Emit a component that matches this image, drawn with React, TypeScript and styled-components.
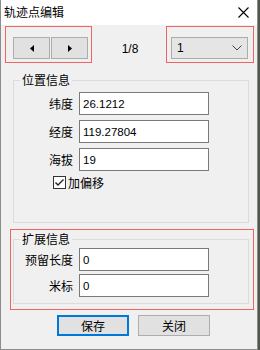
import React from "react";
import styled, { createGlobalStyle } from "styled-components";

const Global = createGlobalStyle`
  html, body { margin: 0; padding: 0; background: #4d5a4a; }
  body { font-family: "Noto Sans CJK SC", "Liberation Sans", sans-serif; font-size: 12px; color: #000; }
  * { box-sizing: border-box; }
`;

const Win = styled.div`
  width: 258px;
  height: 350px;
  background: #f0f0f0;
  border: 1px solid #8c8c8c;
  border-top: none;
  display: flex;
  flex-direction: column;
`;

const TitleBar = styled.div`
  height: 25px;
  background: #fff;
  display: flex;
  align-items: center;
  justify-content: space-between;
  padding: 0 8px 0 3px;
  flex: none;
`;

const Title = styled.span`
  font-size: 12px;
  line-height: 14px;
  margin-top: -2px;
`;

const TopRow = styled.div`
  display: grid;
  grid-template-columns: 87px 1fr 88px;
  width: 249px;
  margin: 1px 0 0 4px;
  height: 37px;
`;

const RedBox = styled.div`
  border: 1px solid #f06464;
`;

const NavBox = styled(RedBox)`
  display: flex;
  gap: 1px;
  padding: 10px 0 0 7px;
`;

const NavBtn = styled.div`
  width: 37px;
  height: 22px;
  background: #e1e1e1;
  border: 1px solid #adadad;
  display: flex;
  align-items: center;
  justify-content: center;
`;

const Counter = styled.div`
  display: flex;
  align-items: center;
  justify-content: center;
  padding-top: 8px;
  padding-left: 2px;
  font-family: "Liberation Sans", sans-serif;
  font-size: 12px;
`;

const ComboBox = styled(RedBox)`
  padding: 10px 4px 0 4px;
`;

const Combo = styled.div`
  height: 22px;
  width: 77px;
  background: #e5e5e5;
  border: 1px solid #acacac;
  display: flex;
  align-items: center;
  justify-content: space-between;
  padding: 0 5px 0 5px;
  font-family: "Liberation Sans", sans-serif;
  font-size: 12px;
`;

const Group = styled.fieldset<{ $h: number }>`
  margin: 0;
  width: 236px;
  height: ${(p) => p.$h}px;
  border: 1px solid #dcdcdc;
  padding: 0;
`;

const Legend = styled.legend`
  margin-left: 6px;
  padding: 0 2px;
  font-size: 12px;
  line-height: 14px;
`;

const Group1 = styled(Group)`
  margin: 10px 0 0 12px;
  padding-top: 5px;
`;

const ExtBox = styled(RedBox)`
  margin: 6px 0 0 9px;
  width: 244px;
  padding: 2px 4px 5px 2px;
`;

const Group2 = styled(Group)`
  padding-top: 2px;
`;

const Rows = styled.div<{ $gap: number }>`
  display: flex;
  flex-direction: column;
  gap: ${(p) => p.$gap}px;
`;

const Row = styled.div`
  display: grid;
  grid-template-columns: 59px 130px;
  column-gap: 6px;
  align-items: center;
`;

const Label = styled.span`
  text-align: right;
  font-size: 12px;
`;

const Input = styled.div`
  height: 23px;
  background: #fff;
  border: 1px solid #7a7a7a;
  display: flex;
  align-items: center;
  padding-left: 3px;
  font-family: "Liberation Sans", sans-serif;
  font-size: 11.5px;
`;

const CheckRow = styled.label`
  display: flex;
  align-items: center;
  gap: 2px;
  margin: 3px 0 0 39px;
  font-size: 12px;
`;

const Buttons = styled.div`
  display: flex;
  gap: 9px;
  margin: 5px 0 0 56px;
`;

const Btn = styled.div<{ $focus?: boolean }>`
  width: 72px;
  height: 21px;
  background: #e1e1e1;
  border: ${(p) => (p.$focus ? "2px solid #0078d7" : "1px solid #adadad")};
  display: flex;
  align-items: center;
  justify-content: center;
  font-size: 12px;
`;

const Tri = ({ dir }: { dir: "l" | "r" }) => (
  <svg width="4" height="7" viewBox="0 0 4 7">
    <path d={dir === "l" ? "M4 0 L0 3.5 L4 7 Z" : "M0 0 L4 3.5 L0 7 Z"} fill="#000" />
  </svg>
);

export default function App() {
  return (
    <>
      <Global />
      <Win>
        <TitleBar>
          <Title>轨迹点编辑</Title>
          <svg width="11" height="11" viewBox="0 0 11 11">
            <path d="M0.5 0.5 L10.5 10.5 M10.5 0.5 L0.5 10.5" stroke="#000" strokeWidth="1.1" />
          </svg>
        </TitleBar>
        <TopRow>
          <NavBox>
            <NavBtn><Tri dir="l" /></NavBtn>
            <NavBtn><Tri dir="r" /></NavBtn>
          </NavBox>
          <Counter>1/8</Counter>
          <ComboBox>
            <Combo>
              <span>1</span>
              <svg width="10" height="6" viewBox="0 0 10 6">
                <path d="M0.5 0.5 L5 5 L9.5 0.5" stroke="#444" strokeWidth="1" fill="none" />
              </svg>
            </Combo>
          </ComboBox>
        </TopRow>
        <Group1 $h={150}>
          <Legend>位置信息</Legend>
          <Rows $gap={5}>
            <Row><Label>纬度</Label><Input>26.1212</Input></Row>
            <Row><Label>经度</Label><Input>119.27804</Input></Row>
            <Row><Label>海拔</Label><Input>19</Input></Row>
          </Rows>
          <CheckRow>
            <svg width="13" height="13" viewBox="0 0 13 13">
              <rect x="0.5" y="0.5" width="12" height="12" fill="#fff" stroke="#333" />
              <path d="M2.5 6.5 L5 9 L10.5 3.5" stroke="#222" strokeWidth="1.4" fill="none" />
            </svg>
            加偏移
          </CheckRow>
        </Group1>
        <ExtBox>
          <Group2 $h={72}>
            <Legend>扩展信息</Legend>
            <Rows $gap={3}>
              <Row><Label>预留长度</Label><Input>0</Input></Row>
              <Row><Label>米标</Label><Input>0</Input></Row>
            </Rows>
          </Group2>
        </ExtBox>
        <Buttons>
          <Btn $focus>保存</Btn>
          <Btn>关闭</Btn>
        </Buttons>
      </Win>
    </>
  );
}
